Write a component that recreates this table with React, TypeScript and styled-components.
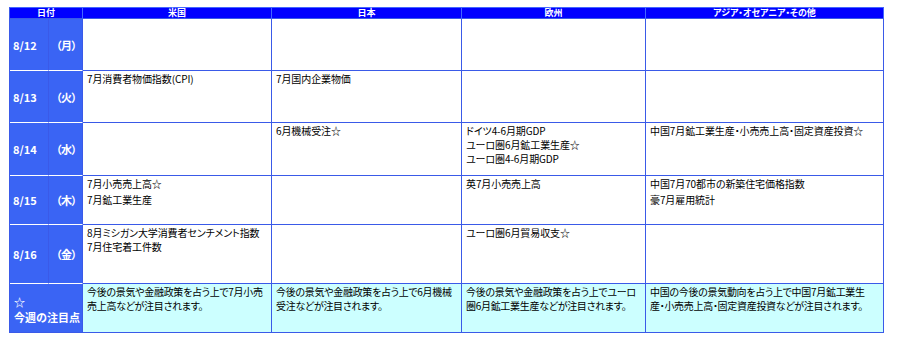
import styled, { createGlobalStyle } from "styled-components";

const GlobalStyle = createGlobalStyle`
  * {
    box-sizing: border-box;
  }
  body {
    margin: 0;
    background: #fff;
    font-family: "Noto Sans CJK JP", "Noto Sans", sans-serif;
  }
`

const Page = styled.main`
  padding: 7px 0 0 9px;
`

const Table = styled.table`
  border-collapse: separate;
  border-spacing: 0;
  table-layout: fixed;
  width: 875px;
  border-top: 1px solid #4466ff;
  border-left: 1px solid #3a5ae8;
`

const Col = styled.col<{ $w: number }>`
  width: ${(p) => p.$w}px;
`

const Row = styled.tr<{ $h: number }>`
  height: ${(p) => p.$h}px;
`

const HeadCell = styled.th`
  background: #0000ff;
  color: #fff;
  font-size: 9px;
  font-weight: bold;
  line-height: 10px;
  padding: 0;
  text-align: center;
  font-feature-settings: "palt";
  border-right: 1px solid #4466ff;
  border-bottom: 1px solid #3a5ae8;
`

const DateCell = styled.td<{ $last?: boolean }>`
  background: #3a64f4;
  color: #fff;
  font-weight: bold;
  font-size: 11px;
  vertical-align: middle;
  white-space: nowrap;
  padding: 0 0 0 3px;
  border-right: 1px solid #3a5ae8;
  border-bottom: 1px solid ${(p) => (p.$last ? "#3a5ae8" : "#ffffff")};
`

const DayCell = styled(DateCell)`
  padding: 0 0 0 2px;
  letter-spacing: -1px;
`

const Cell = styled.td<{ $note?: boolean }>`
  background: ${(p) => (p.$note ? "#ccffff" : "#fff")};
  color: #000;
  font-size: 10px;
  font-feature-settings: "palt";
  letter-spacing: ${(p) => (p.$note ? "-0.3px" : "-0.1px")};
  vertical-align: top;
  padding: 1px 3px 0 4px;
  line-height: 14px;
  white-space: nowrap;
  overflow: hidden;
  border-right: 1px solid #3a5ae8;
  border-bottom: 1px solid #3a5ae8;
`

const Line = styled.div<{ $gap?: number }>`
  margin-top: ${(p) => p.$gap ?? 0}px;
`

const NoteLabel = styled.div`
  padding: 4px 0 0 1px;
  line-height: 15px;
`

type Day = {
  date: string;
  day: string;
  h: number;
  gap?: number;
  cells: string[][];
};

const days: Day[] = [
  { date: "8/12", day: "（月）", h: 52, cells: [[], [], [], []] },
  {
    date: "8/13",
    day: "（火）",
    h: 52,
    cells: [["7月消費者物価指数(CPI)"], ["7月国内企業物価"], [], []],
  },
  {
    date: "8/14",
    day: "（水）",
    h: 53,
    cells: [
      [],
      ["6月機械受注☆"],
      ["ドイツ4-6月期GDP", "ユーロ圏6月鉱工業生産☆", "ユーロ圏4-6月期GDP"],
      ["中国7月鉱工業生産・小売売上高・固定資産投資☆"],
    ],
  },
  {
    date: "8/15",
    day: "（木）",
    h: 49,
    gap: 2,
    cells: [
      ["7月小売売上高☆", "7月鉱工業生産"],
      [],
      ["英7月小売売上高"],
      ["中国7月70都市の新築住宅価格指数", "豪7月雇用統計"],
    ],
  },
  {
    date: "8/16",
    day: "（金）",
    h: 59,
    cells: [
      ["8月ミシガン大学消費者センチメント指数", "7月住宅着工件数"],
      [],
      ["ユーロ圏6月貿易収支☆"],
      [],
    ],
  },
];

const notes: string[][] = [
  ["今後の景気や金融政策を占う上で7月小売", "売上高などが注目されます。"],
  ["今後の景気や金融政策を占う上で6月機械", "受注などが注目されます。"],
  ["今後の景気や金融政策を占う上でユーロ", "圏6月鉱工業生産などが注目されます。"],
  ["中国の今後の景気動向を占う上で中国7月鉱工業生", "産・小売売上高・固定資産投資などが注目されます。"],
];

function App() {
  return (
    <Page>
      <GlobalStyle />
      <Table>
        <colgroup>
          <Col $w={39} />
          <Col $w={34} />
          <Col $w={189} />
          <Col $w={190} />
          <Col $w={184} />
          <Col $w={238} />
        </colgroup>
        <thead>
          <Row $h={11}>
            <HeadCell colSpan={2}>日付</HeadCell>
            <HeadCell>米国</HeadCell>
            <HeadCell>日本</HeadCell>
            <HeadCell>欧州</HeadCell>
            <HeadCell>アジア・オセアニア・その他</HeadCell>
          </Row>
        </thead>
        <tbody>
          {days.map((d) => (
            <Row $h={d.h} key={d.date}>
              <DateCell>{d.date}</DateCell>
              <DayCell>{d.day}</DayCell>
              {d.cells.map((lines, i) => (
                <Cell key={i}>
                  {lines.map((l, j) => (
                    <Line key={j} $gap={j > 0 ? d.gap : 0}>
                      {l}
                    </Line>
                  ))}
                </Cell>
              ))}
            </Row>
          ))}
          <Row $h={49}>
            <DateCell colSpan={2} $last>
              <NoteLabel>
                ☆
                <br />
                今週の注目点
              </NoteLabel>
            </DateCell>
            {notes.map((lines, i) => (
              <Cell $note key={i}>
                {lines.map((l, j) => (
                  <Line key={j}>{l}</Line>
                ))}
              </Cell>
            ))}
          </Row>
        </tbody>
      </Table>
    </Page>
  );
}

export default App;
